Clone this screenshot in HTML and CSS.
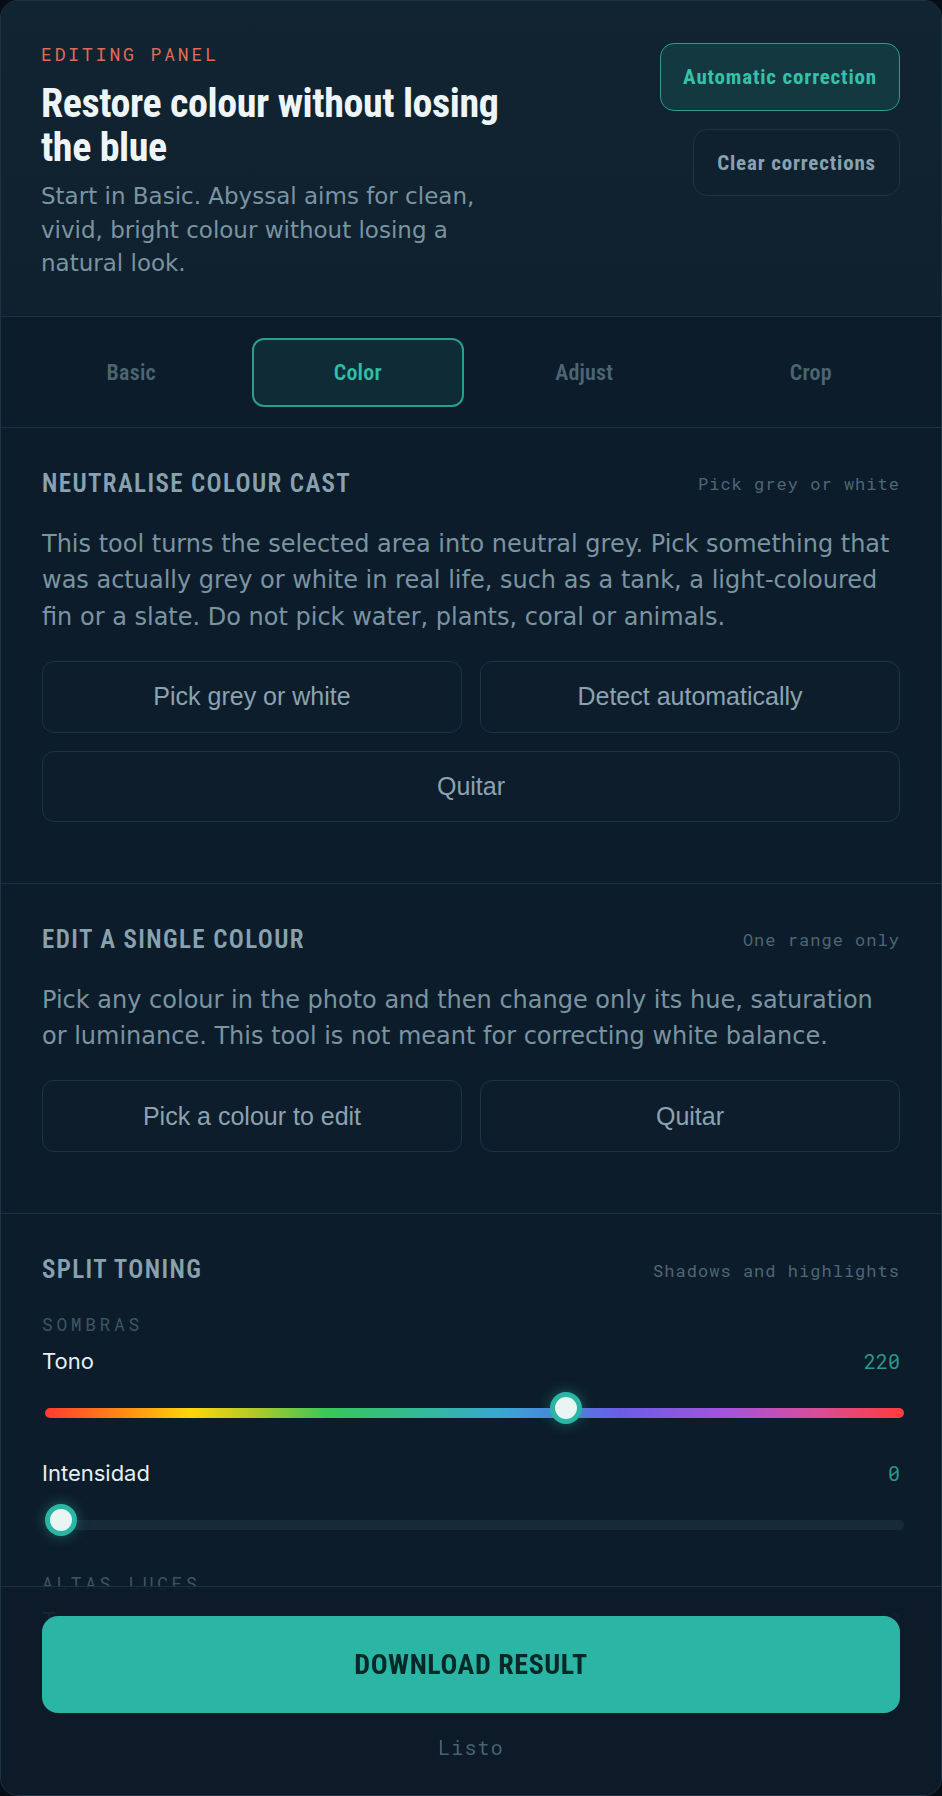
FILE: index.html
```html
<!DOCTYPE html>
<html lang="en">
<head>
<meta charset="utf-8">
<title>Editing panel</title>
<link rel="stylesheet" href="styles.css">
</head>
<body>
<div class="panel">
  <header class="panel-head">
    <div class="intro">
      <p class="eyebrow">EDITING PANEL</p>
      <h1 class="title">Restore colour without losing the blue</h1>
      <p class="lede">Start in Basic. Abyssal aims for clean, vivid, bright colour without losing a natural look.</p>
    </div>
    <div class="head-actions">
      <button class="btn-auto" type="button">Automatic correction</button>
      <button class="btn-clear" type="button">Clear corrections</button>
    </div>
  </header>

  <nav class="tabs">
    <button class="tab" type="button">Basic</button>
    <button class="tab is-active" type="button">Color</button>
    <button class="tab" type="button">Adjust</button>
    <button class="tab" type="button">Crop</button>
  </nav>

  <section class="tool">
    <div class="tool-head">
      <h2 class="tool-title">NEUTRALISE COLOUR CAST</h2>
      <span class="tool-hint">Pick grey or white</span>
    </div>
    <p class="tool-text">This tool turns the selected area into neutral grey. Pick something that was actually grey or white in real life, such as a tank, a light-coloured fin or a slate. Do not pick water, plants, coral or animals.</p>
    <div class="actions">
      <button class="action" type="button">Pick grey or white</button>
      <button class="action" type="button">Detect automatically</button>
      <button class="action wide" type="button">Quitar</button>
    </div>
  </section>

  <section class="tool">
    <div class="tool-head">
      <h2 class="tool-title">EDIT A SINGLE COLOUR</h2>
      <span class="tool-hint">One range only</span>
    </div>
    <p class="tool-text">Pick any colour in the photo and then change only its hue, saturation or luminance. This tool is not meant for correcting white balance.</p>
    <div class="actions">
      <button class="action" type="button">Pick a colour to edit</button>
      <button class="action" type="button">Quitar</button>
    </div>
  </section>

  <section class="tool">
    <div class="tool-head">
      <h2 class="tool-title">SPLIT TONING</h2>
      <span class="tool-hint">Shadows and highlights</span>
    </div>

    <div class="group">
      <p class="group-label">SOMBRAS</p>
      <div class="control">
        <div class="control-row"><span class="control-name">Tono</span><span class="control-value">220</span></div>
        <div class="slider hue"><span class="thumb" style="--v:0.6111"></span></div>
      </div>
      <div class="control">
        <div class="control-row"><span class="control-name">Intensidad</span><span class="control-value">0</span></div>
        <div class="slider"><span class="thumb" style="--v:0"></span></div>
      </div>
    </div>

    <div class="group">
      <p class="group-label">ALTAS LUCES</p>
      <div class="control">
        <div class="control-row"><span class="control-name">Tono</span><span class="control-value">40</span></div>
        <div class="slider hue"><span class="thumb" style="--v:0.1111"></span></div>
      </div>
      <div class="control">
        <div class="control-row"><span class="control-name">Intensidad</span><span class="control-value">0</span></div>
        <div class="slider"><span class="thumb" style="--v:0"></span></div>
      </div>
    </div>
  </section>

  <footer class="panel-foot">
    <button class="download" type="button">DOWNLOAD RESULT</button>
    <p class="status">Listo</p>
  </footer>
</div>
</body>
</html>
```
FILE: styles.css
```css
:root {
  --cond: "Roboto Condensed", "Liberation Sans Narrow", sans-serif;
  --mono: "Roboto Mono", "DejaVu Sans Mono", monospace;
  --body: "DejaVu Sans", sans-serif;
  --ui: "Liberation Sans", Arial, sans-serif;
  --label: Inter, "Noto Sans", sans-serif;
  --line: #1b3040;
  --teal: #2ab5a5;
  --teal-edge: #2a9d8f;
}

* { box-sizing: border-box; }

html, body {
  margin: 0;
  height: 100%;
  background: #070d14;
}

body { font-family: var(--body); }

button { font: inherit; color: inherit; cursor: pointer; }

p, h1, h2 { margin: 0; }

.panel {
  height: 100vh;
  overflow: hidden;
  border: 1px solid #1d3242;
  border-radius: 18px;
  background: #0d1c2a;
}

/* Header */
.panel-head {
  display: flex;
  justify-content: space-between;
  align-items: flex-start;
  padding: 41px 41px 35px 40px;
  border-bottom: 1px solid var(--line);
  background: linear-gradient(180deg, #112431 0%, #102230 60%, #0f202e 100%);
}

.intro { max-width: 480px; }

.eyebrow {
  font-family: var(--mono);
  font-size: 18px;
  line-height: 24px;
  letter-spacing: 0.16em;
  color: #e06b55;
}

.title {
  margin-top: 16px;
  font-family: var(--cond);
  font-weight: 700;
  font-size: 40px;
  line-height: 44px;
  letter-spacing: -0.01em;
  color: #eef5f7;
}

.lede {
  margin-top: 10px;
  font-size: 23px;
  line-height: 33.5px;
  color: #7a94a2;
}

.head-actions {
  display: flex;
  flex-direction: column;
  align-items: flex-end;
  gap: 18px;
  margin-top: 1px;
}

.btn-auto,
.btn-clear {
  height: 68px;
  padding: 0 22px;
  border-radius: 14px;
  font-family: var(--cond);
  font-weight: 700;
  font-size: 21px;
  letter-spacing: 0.04em;
}

.btn-auto {
  border: 1.5px solid var(--teal-edge);
  background: #133840;
  color: #36c1ab;
}

.btn-clear {
  height: 67px;
  padding: 0 23px;
  border: 1.5px solid #1e3443;
  background: #0f212e;
  color: #8aa2b0;
}

/* Tabs */
.tabs {
  display: grid;
  grid-template-columns: repeat(4, 1fr);
  gap: 14px;
  padding: 21px 24px 20px;
  border-bottom: 1px solid var(--line);
  background: #0d1c2a;
}

.tab {
  height: 69px;
  border: 2px solid transparent;
  border-radius: 12px;
  background: transparent;
  font-family: var(--cond);
  font-weight: 600;
  font-size: 22px;
  letter-spacing: 0.01em;
  color: #4c6573;
}

.tab.is-active {
  border-color: var(--teal-edge);
  background: #0f2c36;
  color: #2fbea8;
}

/* Tool sections */
.tool {
  padding: 41px 41px 61px;
  border-bottom: 1px solid var(--line);
}

.tool-head {
  display: flex;
  justify-content: space-between;
  align-items: center;
  margin-bottom: 27px;
}

.tool-title {
  font-family: var(--cond);
  font-weight: 600;
  font-size: 25px;
  line-height: 30px;
  letter-spacing: 0.055em;
  color: #88a2b0;
}

.tool-hint {
  font-family: var(--mono);
  font-size: 17px;
  letter-spacing: 0.06em;
  color: #4d6775;
}

.tool-text {
  font-size: 24px;
  line-height: 36.7px;
  color: #7a94a2;
}

.actions {
  display: grid;
  grid-template-columns: 1fr 1fr;
  gap: 18px;
  margin-top: 25px;
}

.action {
  height: 72px;
  border: 1.5px solid #1d3343;
  border-radius: 12px;
  background: #0d1d2b;
  font-family: var(--ui);
  font-size: 25px;
  color: #8ba3b1;
}

.action.wide { grid-column: 1 / -1; height: 71px; }

/* Split toning controls */
.group { margin-top: 26px; }
.group + .group { margin-top: 0; }

.group-label {
  font-family: var(--mono);
  font-size: 18px;
  line-height: 24px;
  letter-spacing: 0.2em;
  color: #3c5563;
  margin-bottom: 11px;
}

.control { margin-bottom: 35px; }

.control-row {
  display: flex;
  justify-content: space-between;
  align-items: center;
  height: 28px;
  margin-bottom: 17px;
}

.control-name {
  font-family: var(--label);
  font-size: 22px;
  color: #e6eff2;
}

.control-value {
  font-family: var(--mono);
  font-size: 20px;
  color: #2a9a8b;
}

.slider {
  position: relative;
  height: 32px;
  margin: 0 -4px 0 3px;
}

.slider::before {
  content: "";
  position: absolute;
  left: 0;
  right: 0;
  top: 16px;
  height: 10px;
  border-radius: 5px;
  background: #162a38;
}

.slider.hue::before {
  background: linear-gradient(90deg,
    #ff3b30 0%, #ff8a14 9%, #ffd60a 17%, #a9c92b 25%, #37c75a 33%,
    #32b99a 44%, #38a8d0 53%, #4a86e0 59%, #6a5ee6 67%, #a453de 79%,
    #d84d98 90%, #ff3b3b 100%);
}

.thumb {
  position: absolute;
  top: 0;
  left: calc(var(--v) * (100% - 32px));
  width: 32px;
  height: 32px;
  border-radius: 50%;
  background: #e8f5f2;
  border: 5px solid var(--teal);
  box-shadow: 0 0 14px rgba(42, 181, 165, 0.45);
}

/* Footer: stays pinned over the scrolled content */
.panel-foot {
  position: sticky;
  bottom: 0;
  padding: 29px 41px 34px;
  border-top: 1px solid var(--line);
  background: linear-gradient(180deg,
    rgba(13, 27, 41, 0.88) 0px,
    rgba(13, 27, 41, 0.96) 30px,
    #0d1b29 60px);
  text-align: center;
}

.download {
  width: 100%;
  height: 97px;
  border: 0;
  border-radius: 16px;
  background: var(--teal);
  font-family: var(--cond);
  font-weight: 700;
  font-size: 28px;
  letter-spacing: 0.02em;
  color: #072826;
}

.status {
  margin-top: 20px;
  font-family: var(--mono);
  font-size: 20px;
  line-height: 28px;
  letter-spacing: 0.06em;
  color: #4a6371;
}
```
